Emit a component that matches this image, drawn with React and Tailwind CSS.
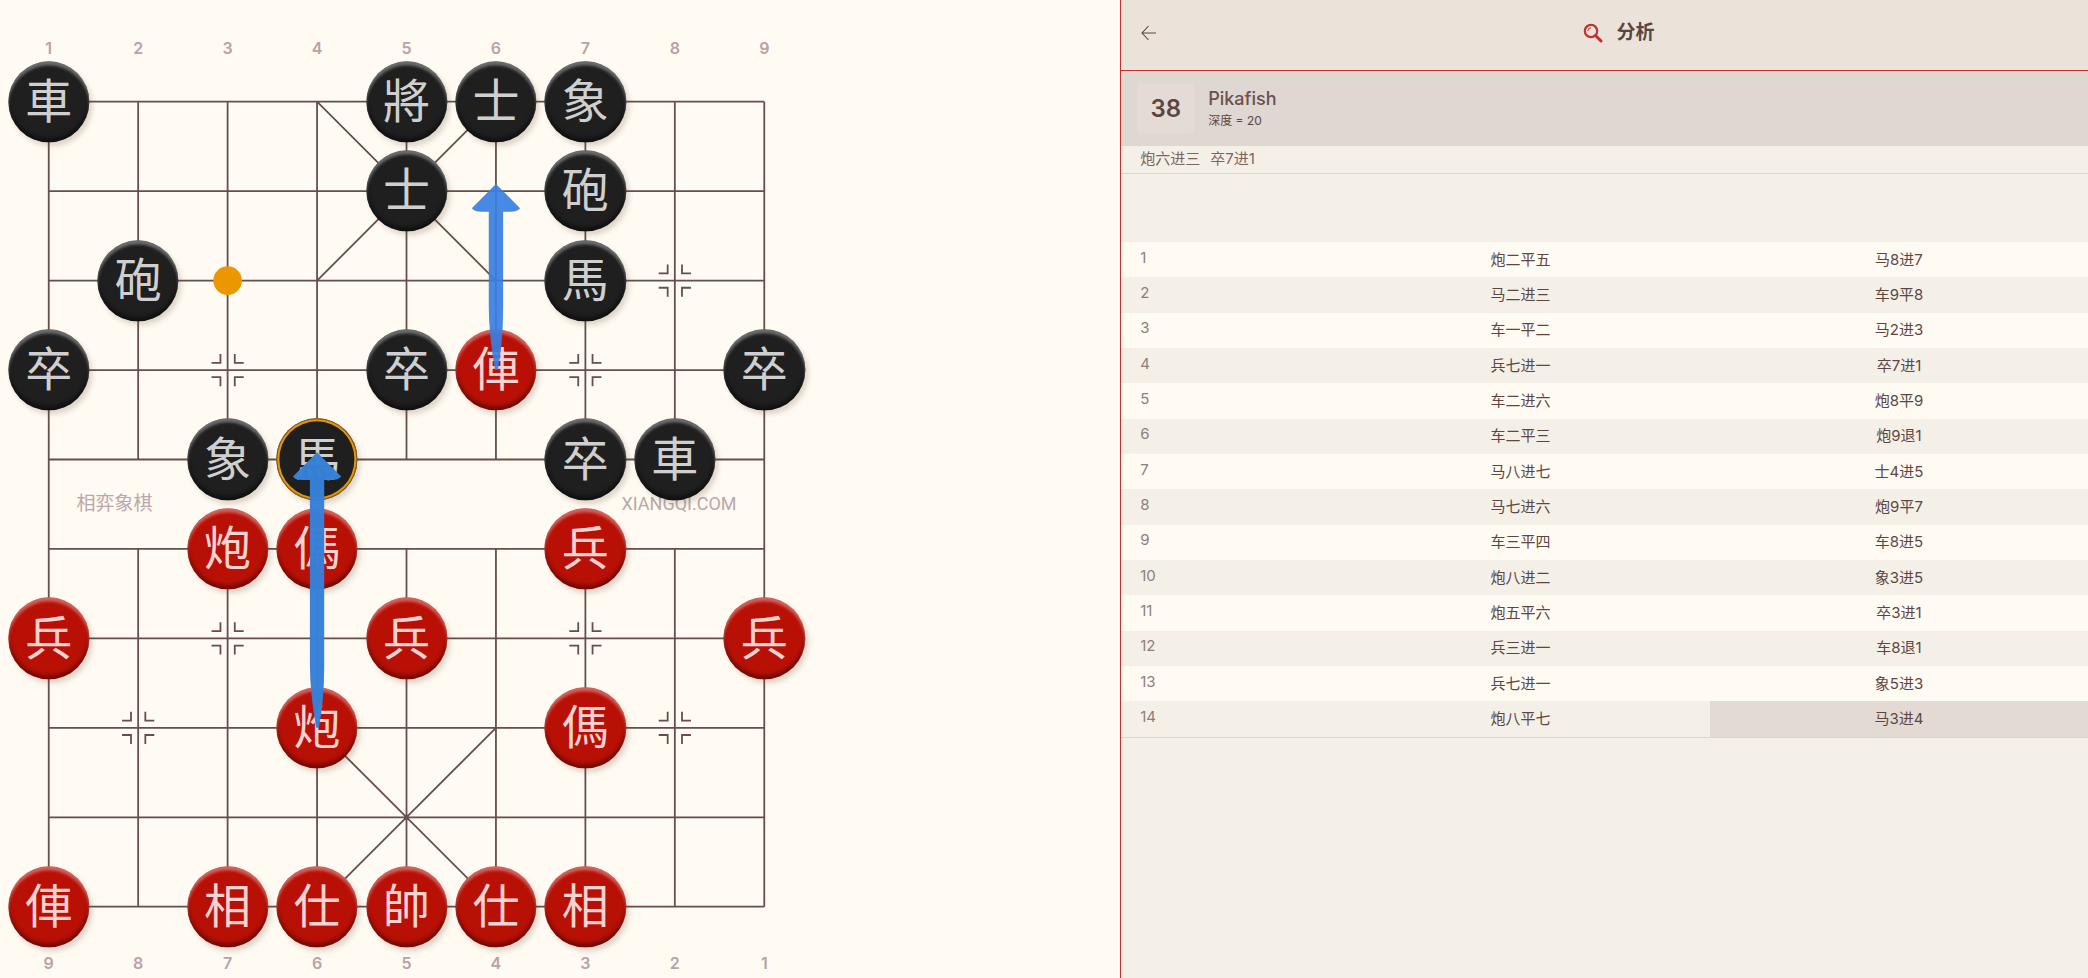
const MOVES = [
  ["炮二平五", "马8进7"],
  ["马二进三", "车9平8"],
  ["车一平二", "马2进3"],
  ["兵七进一", "卒7进1"],
  ["车二进六", "炮8平9"],
  ["车二平三", "炮9退1"],
  ["马八进七", "士4进5"],
  ["马七进六", "炮9平7"],
  ["车三平四", "车8进5"],
  ["炮八进二", "象3进5"],
  ["炮五平六", "卒3进1"],
  ["兵三进一", "车8退1"],
  ["兵七进一", "象5进3"],
  ["炮八平七", "马3进4"],
];

// [glyph, column, row, side, last moved]
const PIECES = [
  ["車", 0, 0, "b"],
  ["將", 4, 0, "b"],
  ["士", 5, 0, "b"],
  ["象", 6, 0, "b"],
  ["士", 4, 1, "b"],
  ["砲", 6, 1, "b"],
  ["砲", 1, 2, "b"],
  ["馬", 6, 2, "b"],
  ["卒", 0, 3, "b"],
  ["卒", 4, 3, "b"],
  ["俥", 5, 3, "r"],
  ["卒", 8, 3, "b"],
  ["象", 2, 4, "b"],
  ["馬", 3, 4, "b", true],
  ["卒", 6, 4, "b"],
  ["車", 7, 4, "b"],
  ["炮", 2, 5, "r"],
  ["傌", 3, 5, "r"],
  ["兵", 6, 5, "r"],
  ["兵", 0, 6, "r"],
  ["兵", 4, 6, "r"],
  ["兵", 8, 6, "r"],
  ["炮", 3, 7, "r"],
  ["傌", 6, 7, "r"],
  ["俥", 0, 9, "r"],
  ["相", 2, 9, "r"],
  ["仕", 3, 9, "r"],
  ["帥", 4, 9, "r"],
  ["仕", 5, 9, "r"],
  ["相", 6, 9, "r"],
];

const FILES = [1, 2, 3, 4, 5, 6, 7, 8, 9];
const MARKS = [[7, 2], [2, 3], [6, 3], [2, 6], [6, 6], [1, 7], [7, 7]];
const at = (n) => n * 100 + 50;

function Lines() {
  let d = "";
  for (let r = 0; r < 10; r++) d += `M50 ${at(r)}H850`;
  for (let c = 0; c < 9; c++) {
    d += c === 0 || c === 8 ? `M${at(c)} 50V950` : `M${at(c)} 50V450M${at(c)} 550V950`;
  }
  d += "M350 50L550 250M550 50L350 250M350 750L550 950M550 750L350 950";
  for (const [c, r] of MARKS) {
    for (const sx of [-1, 1]) {
      for (const sy of [-1, 1]) {
        d += `M${at(c) + sx * 8} ${at(r) + sy * 18}v${-sy * 10}h${sx * 10}`;
      }
    }
  }
  return (
    <svg viewBox="0 0 900 1000" className="absolute inset-0 size-full" aria-hidden="true">
      <path d={d} fill="none" stroke="#654e4b" strokeWidth="2" />
      <circle cx="250" cy="250" r="16" fill="#eb9800" />
    </svg>
  );
}

function Arrow({ col, from, to, color }) {
  const x = at(col);
  const tip = at(to) - 8;
  const tail = at(from);
  return (
    <path
      fill={color}
      d={`M${x} ${tip}L${x + 27} ${tip + 27}Q${x + 24} ${tip + 31} ${x + 16} ${tip + 31}H${x + 8}V${tail - 70}Q${x + 8} ${tail - 30} ${x + 2} ${tail}H${x - 1}Q${x - 8} ${tail - 40} ${x - 8} ${tail - 70}V${tip + 31}H${x - 16}Q${x - 24} ${tip + 31} ${x - 27} ${tip + 27}Z`}
    />
  );
}

function Piece({ glyph, col, row, side, last }) {
  const tone = last
    ? "bg-[#1f1f1f] text-[#cfcfcf] shadow-[inset_0_0_0_1px_#6b5a3a,inset_0_0_0_3px_#e69500,3px_4px_5px_rgba(90,70,50,0.2)]"
    : side === "b"
      ? "bg-[#1f1f1f] text-[#cfcfcf] shadow-[inset_0_4px_3px_rgba(255,255,255,0.35),inset_0_-4px_4px_rgba(0,0,0,0.5),3px_4px_5px_rgba(90,70,50,0.2)]"
      : "bg-[#b91006] text-[#f8d3d1] shadow-[inset_0_4px_3px_rgba(255,255,255,0.35),inset_0_-4px_4px_rgba(0,0,0,0.4),3px_4px_5px_rgba(90,70,50,0.2)]";
  return (
    <button
      type="button"
      className={`absolute flex aspect-square w-[10.1%] -translate-x-1/2 -translate-y-1/2 items-center justify-center rounded-full pb-2 font-['Noto_Sans_CJK_TC',sans-serif] text-[47px] leading-none ${tone}`}
      style={{ left: `${((col + 0.5) / 9) * 100}%`, top: `${(row + 0.5) * 10}%` }}
    >
      {glyph}
    </button>
  );
}

function FileLabels({ files, className }) {
  return (
    <div className={`grid grid-cols-9 text-center text-base leading-4 font-semibold text-[#b8a2a6] ${className}`}>
      {files.map((n) => (
        <span key={n}>{n}</span>
      ))}
    </div>
  );
}

function Board() {
  return (
    <main className="flex-1 pt-10 pl-1">
      <div className="w-[805px]">
        <FileLabels files={FILES} className="pb-px" />
        <div className="relative aspect-[9/10]">
          <Lines />
          <div className="absolute inset-x-[9%] top-1/2 flex -translate-y-1/2 items-center justify-between text-[#bba7aa]">
            <span className="text-[19px]">相弈象棋</span>
            <span className="font-['Roboto','Noto_Sans_CJK_SC',sans-serif] text-lg">XIANGQI.COM</span>
          </div>
          {PIECES.map(([glyph, col, row, side, last]) => (
            <Piece key={`${col}-${row}`} glyph={glyph} col={col} row={row} side={side} last={last} />
          ))}
          <svg viewBox="0 0 900 1000" className="pointer-events-none absolute inset-0 size-full" aria-hidden="true">
            <g opacity="0.92">
              <Arrow col={5} from={3} to={1} color="#387fe2" />
            </g>
            <g opacity="0.98">
              <Arrow col={3} from={7} to={4} color="#3681d8" />
            </g>
          </svg>
        </div>
        <FileLabels files={[...FILES].reverse()} className="pt-1" />
      </div>
    </main>
  );
}

function Analysis() {
  return (
    <aside className="w-[46.35%] border-l border-[#c4302b] bg-[#f4f0e8]">
      <header className="relative flex h-[71px] items-center justify-center gap-[14px] border-b border-[#c4302b] bg-[#ebe2d9] pb-1 pl-7">
        <button type="button" aria-label="返回" className="absolute left-5">
          <svg viewBox="0 0 16 16" className="size-4" fill="none" stroke="#5d4642" strokeWidth="1.1">
            <path d="M15 8H1.2M7.5 1L1 8l6.500 7" />
          </svg>
        </button>
        <svg viewBox="0 0 20 20" className="size-5" fill="none" stroke="#c4302b" aria-hidden="true">
          <circle cx="8" cy="8" r="6.200" strokeWidth="2.200" />
          <path d="M12.500 12.500L18 18" strokeWidth="3" strokeLinecap="round" />
          <path d="M4.800 8A3.200 3.200 0 0 1 8 4.800" strokeWidth="1" />
        </svg>
        <h1 className="text-[19px] leading-6 font-bold text-[#5a4543]">分析</h1>
      </header>
      <section className="flex h-[75px] items-center gap-[14px] bg-[#dfd7d1] pl-4">
        <div className="flex h-[49px] w-[57px] items-center justify-center rounded bg-[#e3dbd4] text-2xl font-semibold text-[#5d4642]">38</div>
        <div>
          <h2 className="text-lg leading-6 font-medium text-[#6b504d]">Pikafish</h2>
          <p className="text-xs leading-5 text-[#5d4642]">深度 = 20</p>
        </div>
      </section>
      <p className="flex h-7 items-center gap-[10px] border-b border-[#ddd6c8] pl-[19px] text-[15px] text-[#7a6562]">
        <span>炮六进三</span>
        <span>卒7进1</span>
      </p>
      <table className="mt-[68px] h-[496px] w-full table-fixed border-b border-[#ddd6c8] text-[15px] leading-5 text-[#5d4642]">
        <colgroup>
          <col className="w-[21.700%]" />
          <col className="w-[39.200%]" />
          <col className="w-[39.100%]" />
        </colgroup>
        <tbody>
          {MOVES.map(([red, black], i) => (
            <tr key={i} className="odd:bg-[#fffaf2]">
              <th scope="row" className="pb-1 pl-[19px] text-left font-normal text-[#8f7d7a]">{i + 1}</th>
              <td className="text-center">{red}</td>
              <td className={i === 13 ? "bg-[#e2dad3] text-center" : "text-center"}>{black}</td>
            </tr>
          ))}
        </tbody>
      </table>
    </aside>
  );
}

export default function App() {
  return (
    <div className="flex min-h-screen bg-[#fffaf2] font-['Inter','Noto_Sans_CJK_SC',sans-serif]">
      <Board />
      <Analysis />
    </div>
  );
}
